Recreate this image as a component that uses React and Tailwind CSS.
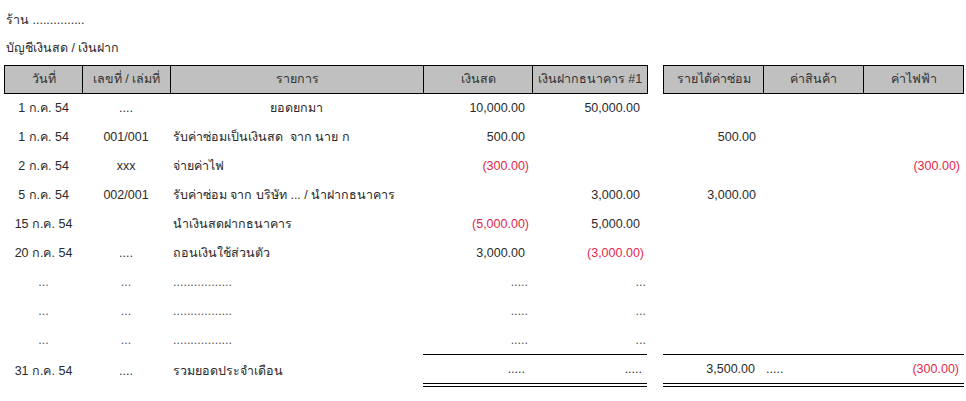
import React from "react";

const LEFT = "grid grid-cols-[77px_88px_253px_109px_115px] w-[644px]";
const RIGHT = "grid grid-cols-[99px_100px_100px] w-[301px]";

const rows = [
  { date: "1 ก.ค. 54", doc: "....", desc: "ยอดยกมา", center: true, cash: "10,000.00", bank: "50,000.00" },
  { date: "1 ก.ค. 54", doc: "001/001", desc: "รับค่าซ่อมเป็นเงินสด\u00a0\u00a0จาก นาย ก", cash: "500.00", repair: "500.00" },
  { date: "2 ก.ค. 54", doc: "xxx", desc: "จ่ายค่าไฟ", cash: "(300.00)", power: "(300.00)" },
  { date: "5 ก.ค. 54", doc: "002/001", desc: "รับค่าซ่อม จาก บริษัท ... / นำฝากธนาคาร", bank: "3,000.00", repair: "3,000.00" },
  { date: "15 ก.ค. 54", doc: "", desc: "นำเงินสดฝากธนาคาร", cash: "(5,000.00)", bank: "5,000.00" },
  { date: "20 ก.ค. 54", doc: "....", desc: "ถอนเงินใช้ส่วนตัว", cash: "3,000.00", bank: "(3,000.00)" },
];

// negative numbers sit a little further right, as in an accounting format
function Num({ v, className = "" }) {
  if (!v) return <div className={className} />;
  const neg = v.startsWith("(");
  return (
    <div
      className={`flex items-center justify-end ${neg ? "pr-[3px] text-[#e3284a]" : "pr-[7px]"} ${className}`}
    >
      {v}
    </div>
  );
}

function Cell({ children, className = "" }) {
  return <div className={`flex items-center ${className}`}>{children}</div>;
}

export default function App() {
  return (
    <div
      className="bg-white min-h-screen pl-[4px] pt-[6px] text-[12.5px] text-[#2b2b2b]"
      style={{ fontFamily: '"Liberation Sans", "Noto Sans", Tahoma, sans-serif' }}
    >
      <div className="h-[28px] flex items-center pl-[2px]">ร้าน ...............</div>
      <div className="h-[28px] flex items-center pl-[2px]">บัญชีเงินสด / เงินฝาก</div>

      {/* header */}
      <div className="mt-[3px] flex gap-[15px]">
        <div className={`${LEFT} h-[29px] border border-black bg-[#c0c0c0] text-[#333]`}>
          <Cell className="justify-center">วันที่</Cell>
          <Cell className="justify-center border-l border-black">เลขที่ / เล่มที่</Cell>
          <Cell className="justify-center border-l border-black">รายการ</Cell>
          <Cell className="justify-center border-l border-black">เงินสด</Cell>
          <Cell className="justify-center border-l border-black">เงินฝากธนาคาร #1</Cell>
        </div>
        <div className={`${RIGHT} h-[29px] border border-black bg-[#c0c0c0] text-[#333]`}>
          <Cell className="justify-center">รายได้ค่าซ่อม</Cell>
          <Cell className="justify-center border-l border-black">ค่าสินค้า</Cell>
          <Cell className="justify-center border-l border-black">ค่าไฟฟ้า</Cell>
        </div>
      </div>

      {/* entries */}
      {rows.map((r, i) => (
        <div key={i} className="flex gap-[15px] h-[29px]">
          <div className={`${LEFT} border-x border-transparent`}>
            <Cell className="justify-center">{r.date}</Cell>
            <Cell className="justify-center">{r.doc}</Cell>
            <Cell className={r.center ? "justify-center" : "pl-[3px]"}>{r.desc}</Cell>
            <Num v={r.cash} />
            <Num v={r.bank} />
          </div>
          <div className={`${RIGHT} border-x border-transparent`}>
            <Num v={r.repair} />
            <Num v={r.goods} />
            <Num v={r.power} />
          </div>
        </div>
      ))}

      {/* placeholder rows */}
      {[0, 1, 2].map((i) => (
        <div key={"d" + i} className="flex gap-[15px] h-[29px] text-[#555]">
          <div className={`${LEFT} border-x border-transparent`}>
            <Cell className="justify-center">...</Cell>
            <Cell className="justify-center">...</Cell>
            <Cell className="pl-[3px]">.................</Cell>
            <Cell className={`justify-end pr-[4px] ${i === 2 ? "border-b border-black" : ""}`}>.....</Cell>
            <Cell className={`justify-end pr-[1px] ${i === 2 ? "border-b border-black" : ""}`}>...</Cell>
          </div>
          <div className={`${RIGHT} ${i === 2 ? "border-b border-black" : ""}`} />
        </div>
      ))}

      {/* total */}
      <div className="flex gap-[15px] h-[32px]">
        <div className={`${LEFT} border-x border-transparent`}>
          <Cell className="justify-center">31 ก.ค. 54</Cell>
          <Cell className="justify-center">....</Cell>
          <Cell className="pl-[3px]">รวมยอดประจำเดือน</Cell>
          <Cell className="justify-end pr-[7px] border-b-4 border-double border-black">.....</Cell>
          <Cell className="justify-end pr-[5px] border-b-4 border-double border-black">.....</Cell>
        </div>
        <div className={`${RIGHT} border-b-4 border-double border-black`}>
          <Num v="3,500.00" />
          <Cell className="pl-[4px]">.....</Cell>
          <Num v="(300.00)" />
        </div>
      </div>
    </div>
  );
}
